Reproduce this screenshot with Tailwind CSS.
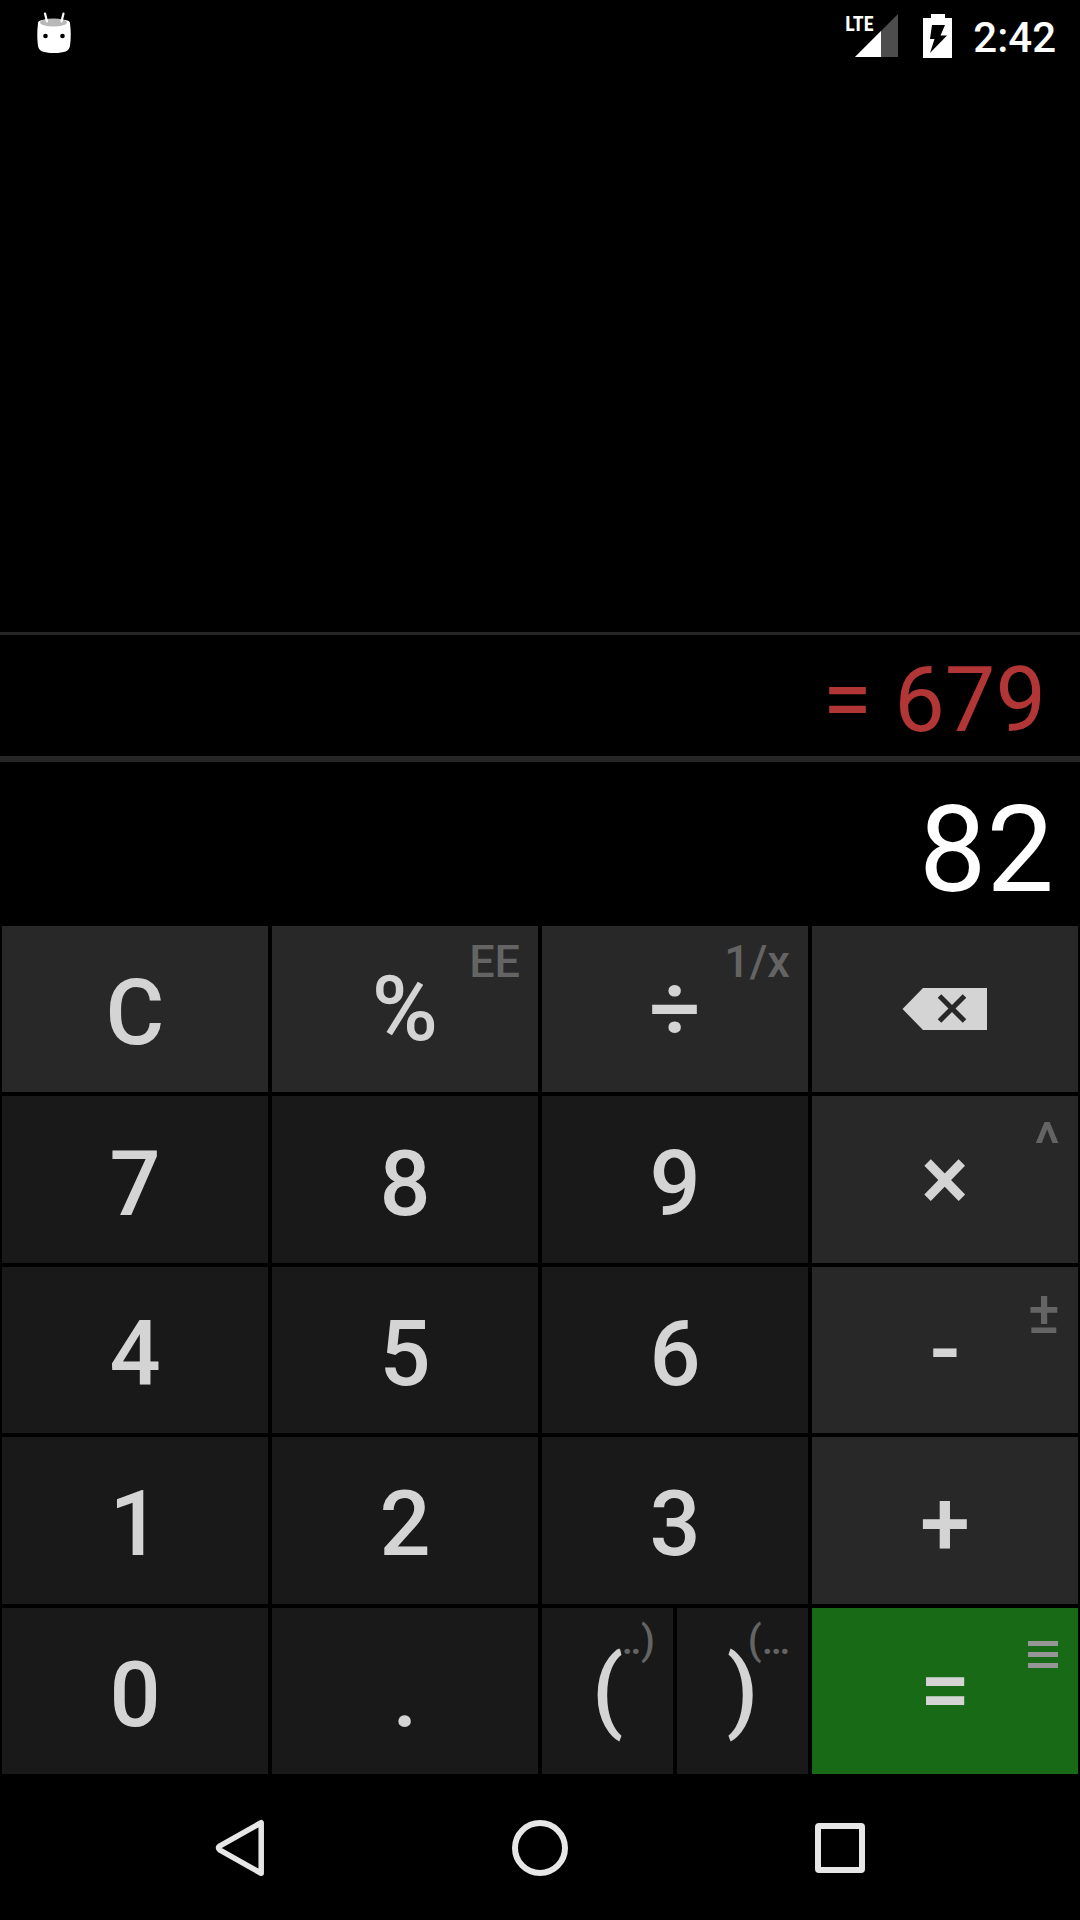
<!DOCTYPE html>
<html lang="en">
<head>
<meta charset="utf-8">
<meta name="viewport" content="width=device-width, initial-scale=1">
<title>Calculator</title>
<script src="https://cdn.jsdelivr.net/npm/@tailwindcss/browser@4"></script>
</head>
<body class="bg-black">
<div class="flex h-screen flex-col bg-black font-['Roboto',sans-serif] text-white">

  <!-- Status bar -->
  <header class="flex h-[72px] shrink-0 items-center justify-between pl-9 pr-6">
    <svg class="h-[72px] w-9" viewBox="0 0 36 72" aria-label="Debug notification">
      <path d="M2 23C2 20 9 19 18 19s16 1 16 4c1 8 1 16 0 23-1 5-5 7-16 7S3 51 2 46C1 39 1 31 2 23z" fill="#fff"/>
      <ellipse cx="17.500" cy="22.500" rx="13.500" ry="4" fill="#b8b8b8"/>
      <path d="M9 13.500l2 8M27.500 13.500l-2 8" stroke="#fff" stroke-width="2.200" stroke-linecap="round"/>
      <circle cx="9.500" cy="36" r="2.300"/><circle cx="26.500" cy="36" r="2.300"/>
    </svg>
    <div class="flex items-center">
      <div class="relative mr-[25px] h-[72px] w-[53px]">
        <svg class="h-full w-full" viewBox="1 0 53 72" aria-hidden="true">
          <path d="M54 14v43H11z" fill="#4d4d4d"/>
          <path d="M37 31v26H11z" fill="#fff"/>
        </svg>
        <span class="absolute left-0 top-3 font-['Roboto_Condensed','Liberation_Sans_Narrow',Roboto,sans-serif] text-[20px] leading-6 font-bold">LTE</span>
      </div>
      <svg class="mr-5 h-[72px] w-[30px]" viewBox="0 0 30 72" aria-label="Battery charging">
        <path d="M8 14h14v4h7v40H0V18h8z" fill="#fff"/>
        <path d="M9 25h13l-4.500 10.500H24L7 53l4.500-14H7z" fill="#000"/>
      </svg>
      <time class="pt-1 text-[42px] leading-[68px] font-medium">2:42</time>
    </div>
  </header>

  <main class="flex min-h-0 flex-1 flex-col">
    <section class="flex-[560_1_0%]" aria-label="History"></section>
    <output class="flex h-[130px] shrink-0 items-center justify-end border-t-[3px] border-b-[6px] border-[#262626] pt-2.5 pr-[34px] text-[90px] leading-none text-[#b33636]">= 679</output>
    <div class="h-[162px] shrink-0 pt-3.5 pr-[26px]">
      <input class="h-full w-full bg-transparent text-right text-[120px] leading-none outline-none" type="text" value="82" aria-label="Expression">
    </div>

    <!-- Keypad -->
    <div class="grid min-h-0 flex-[848_1_0%] grid-cols-4 grid-rows-5 gap-1 p-0.5 text-[90px] leading-none font-medium text-[#d4d4d4]">
      <button class="bg-[#282828] pt-2.5">C</button>
      <button class="relative bg-[#282828] pt-0.5">%<span class="absolute top-[13px] right-[18px] text-[45px] leading-none text-[#646464]">EE</span></button>
      <button class="relative bg-[#282828] pt-0.5">÷<span class="absolute top-[13px] right-[18px] text-[45px] leading-none text-[#646464]">1/x</span></button>
      <button class="flex items-center justify-center bg-[#282828]" aria-label="Backspace">
        <svg class="h-[42px] w-[86px]" viewBox="0 0 86 42">
          <path d="M0.500 21L21 0h64v42H21z" fill="#d4d4d4"/>
          <path d="M37.500 8l25 25M62.500 8l-25 25" stroke="#282828" stroke-width="5"/>
        </svg>
      </button>

      <button class="bg-[#191919] pt-2.5">7</button>
      <button class="bg-[#191919] pt-2.5">8</button>
      <button class="bg-[#191919] pt-2.5">9</button>
      <button class="relative bg-[#282828]">×<span class="absolute top-[18px] right-[18px] text-[60px] leading-none text-[#646464]">^</span></button>

      <button class="bg-[#191919] pt-2.5">4</button>
      <button class="bg-[#191919] pt-2.5">5</button>
      <button class="bg-[#191919] pt-2.5">6</button>
      <button class="relative bg-[#282828]">-<span class="absolute top-4 right-[18px] text-[60px] leading-none text-[#646464]">±</span></button>

      <button class="bg-[#191919] pt-2.5">1</button>
      <button class="bg-[#191919] pt-2.5">2</button>
      <button class="bg-[#191919] pt-2.5">3</button>
      <button class="bg-[#282828] pt-2.5">+</button>

      <button class="bg-[#191919] pt-2.5">0</button>
      <button class="bg-[#191919] pt-2.5">.</button>
      <div class="grid grid-cols-2 gap-1">
        <button class="relative bg-[#191919]"><span class="absolute top-[13px] right-[18px] text-[40px] leading-none text-[#646464]">…)</span><span class="relative">(</span></button>
        <button class="relative bg-[#191919]"><span class="absolute top-[13px] right-[18px] text-[40px] leading-none text-[#646464]">(…</span><span class="relative">)</span></button>
      </div>
      <button class="relative bg-[#186a16]">=
        <svg class="absolute top-8 right-5 h-[30px] w-[30px]" viewBox="0 0 30 30" aria-hidden="true">
          <path d="M0 3.500h30M0 14.500h30M0 25.500h30" stroke="#969696" stroke-width="5"/>
        </svg>
      </button>
    </div>
  </main>

  <!-- Navigation bar -->
  <nav class="mx-auto grid h-36 w-5/6 shrink-0 grid-cols-3" aria-label="System navigation">
    <button class="flex items-center justify-center" aria-label="Back">
      <svg class="h-[60px] w-[60px]" viewBox="0 0 60 60" fill="none" stroke="#e6e6e6" stroke-width="5.500" stroke-linejoin="round">
        <path d="M51.200 4.700v50.600L10 32.200q-3-2.200 0-4.400z"/>
      </svg>
    </button>
    <button class="flex items-center justify-center" aria-label="Home">
      <svg class="h-[60px] w-[60px]" viewBox="0 0 60 60" fill="none" stroke="#e6e6e6" stroke-width="6">
        <circle cx="30" cy="30" r="25"/>
      </svg>
    </button>
    <button class="flex items-center justify-center" aria-label="Overview">
      <svg class="h-[60px] w-[60px]" viewBox="0 0 60 60" fill="none" stroke="#e6e6e6" stroke-width="6">
        <rect x="8" y="8" width="44" height="44" rx="1"/>
      </svg>
    </button>
  </nav>
</div>
</body>
</html>
